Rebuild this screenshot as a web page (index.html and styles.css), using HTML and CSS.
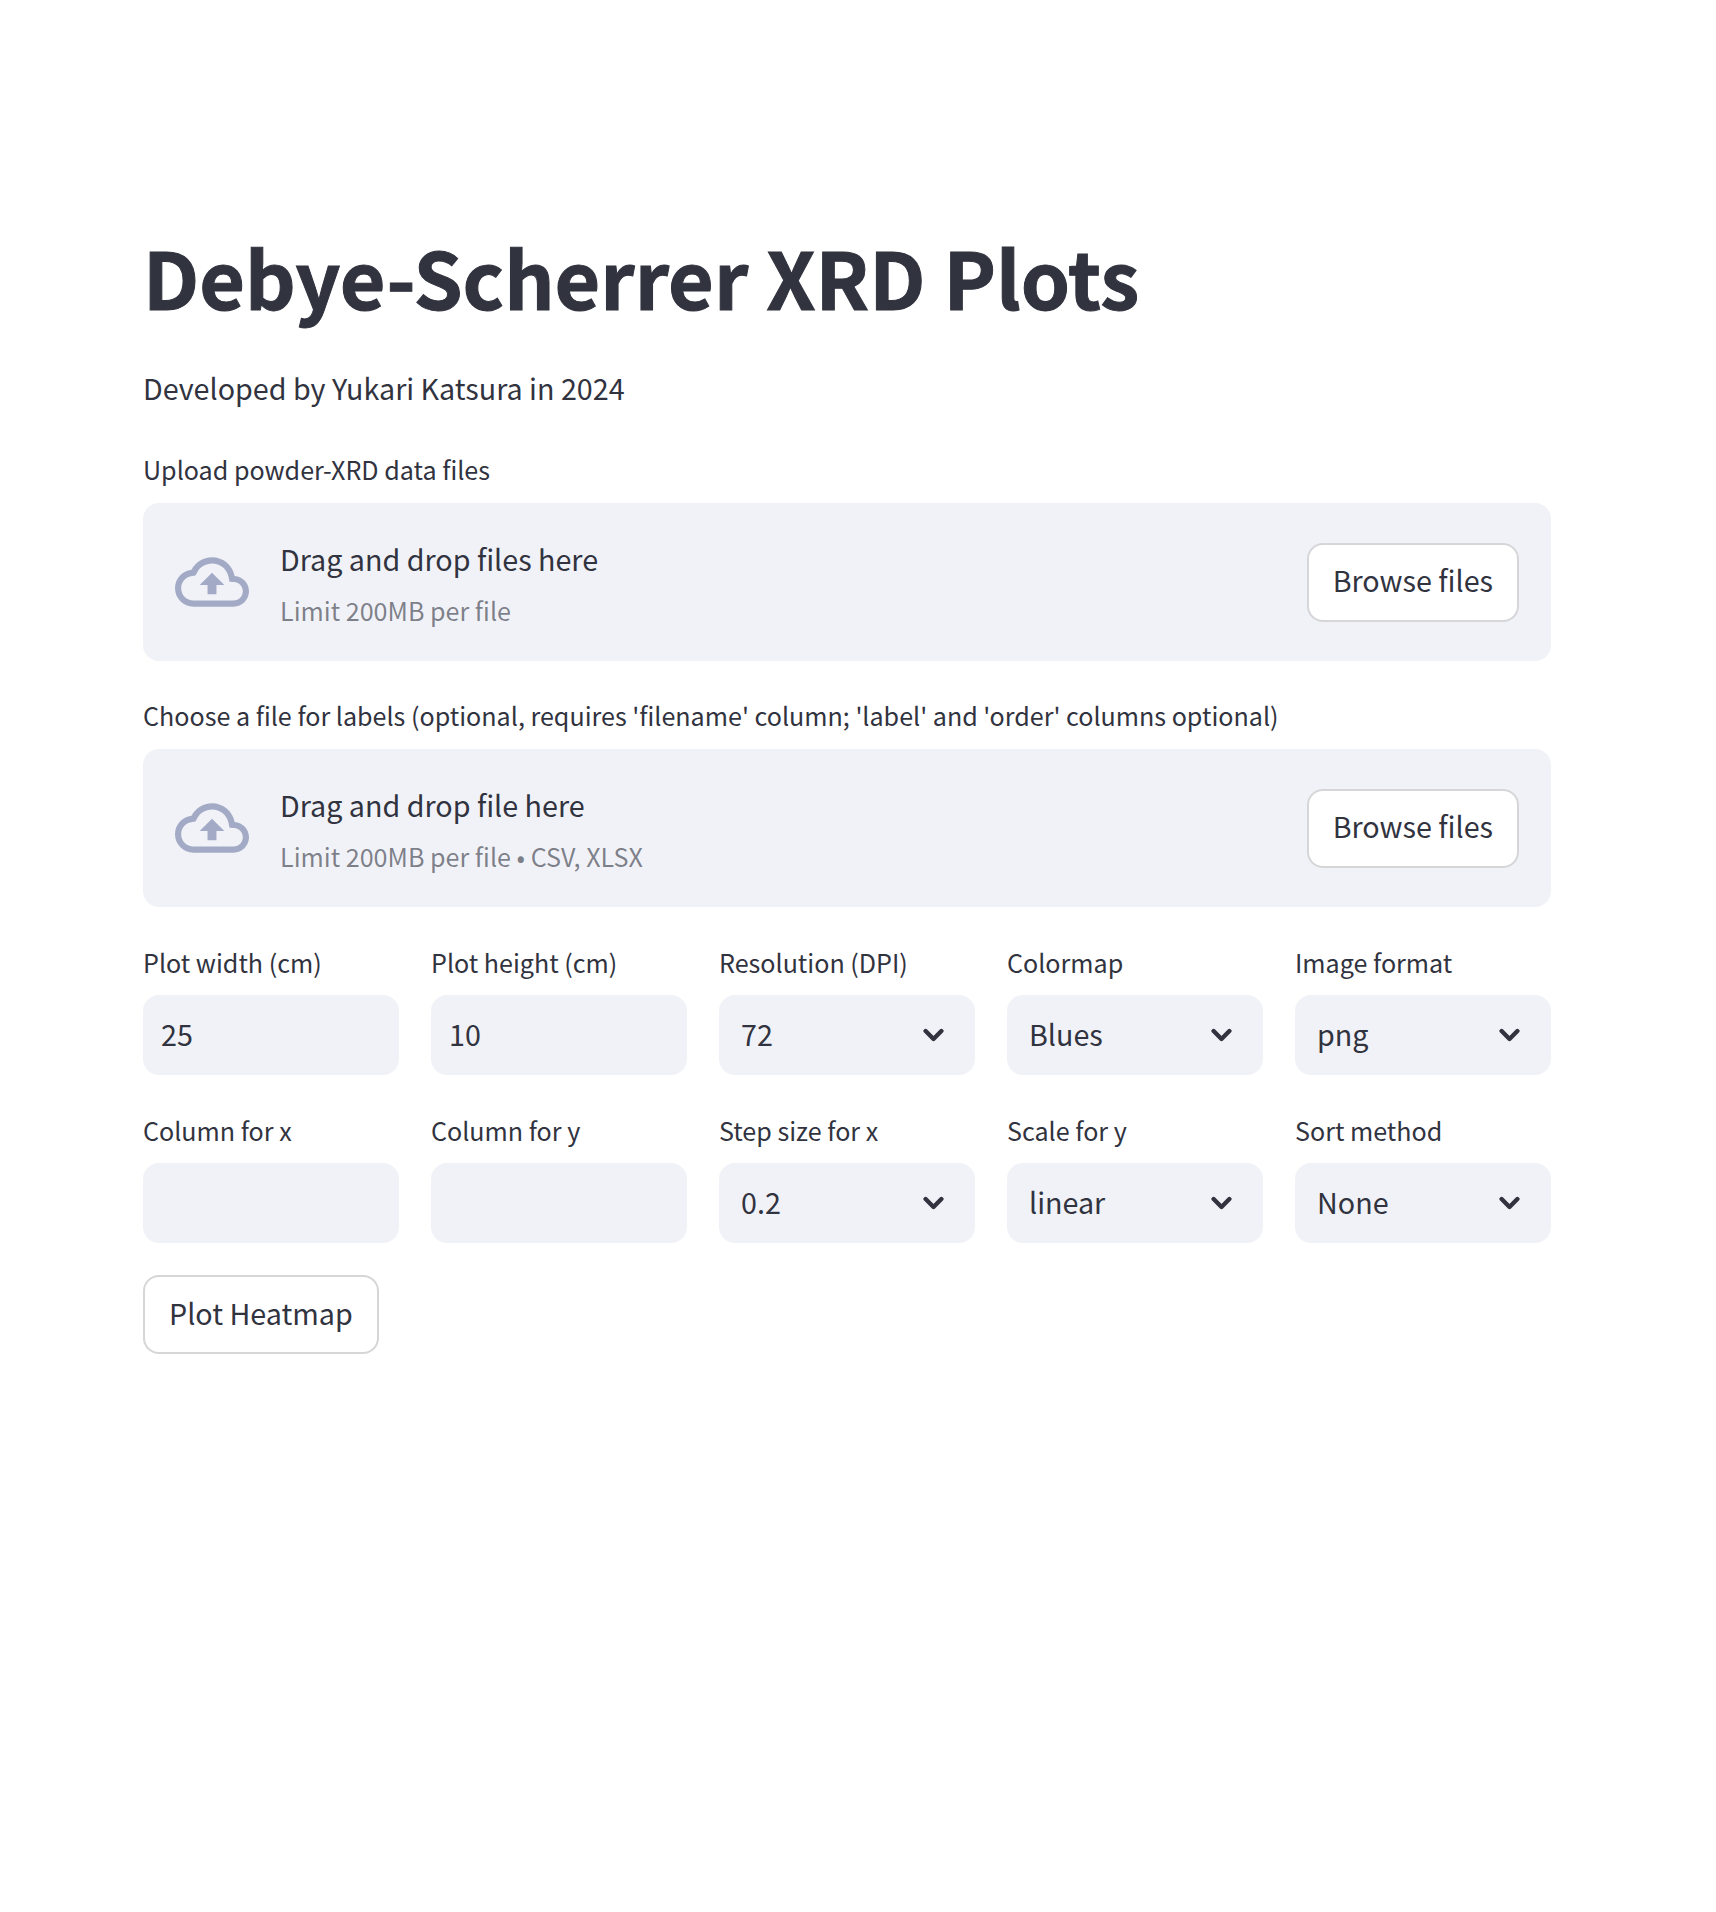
FILE: index.html
```html
<!DOCTYPE html>
<html lang="en">
<head>
<meta charset="utf-8">
<title>Debye-Scherrer XRD Plots</title>
<link rel="stylesheet" href="styles.css">
</head>
<body>
<main class="page">
  <h1 class="title">Debye-Scherrer XRD Plots</h1>
  <p class="subtitle">Developed by Yukari Katsura in 2024</p>

  <section class="uploader">
    <label class="label">Upload powder-XRD data files</label>
    <div class="dropzone">
      <svg class="cloud" viewBox="0 0 24 24"><path d="M19.35 10.04C18.67 6.59 15.64 4 12 4 9.11 4 6.6 5.64 5.35 8.04 2.34 8.36 0 10.91 0 14c0 3.31 2.69 6 6 6h13c2.76 0 5-2.24 5-5 0-2.64-2.05-4.78-4.65-4.96zM19 18H6c-2.21 0-4-1.79-4-4 0-2.05 1.53-3.76 3.56-3.97l1.07-.11.5-.95C8.08 7.14 9.94 6 12 6c2.62 0 4.88 1.86 5.39 4.43l.3 1.5 1.53.11c1.56.1 2.78 1.41 2.78 2.96 0 1.65-1.35 3-3 3zM8 13h2.55v3h2.9v-3H16l-4-4z"/></svg>
      <div class="drop-text">
        <div class="drop-main">Drag and drop files here</div>
        <div class="drop-sub">Limit 200MB per file</div>
      </div>
      <button class="btn">Browse files</button>
    </div>
  </section>

  <section class="uploader">
    <label class="label">Choose a file for labels (optional, requires 'filename' column; 'label' and 'order' columns optional)</label>
    <div class="dropzone">
      <svg class="cloud" viewBox="0 0 24 24"><path d="M19.35 10.04C18.67 6.59 15.64 4 12 4 9.11 4 6.6 5.64 5.35 8.04 2.34 8.36 0 10.91 0 14c0 3.31 2.69 6 6 6h13c2.76 0 5-2.24 5-5 0-2.64-2.05-4.78-4.65-4.96zM19 18H6c-2.21 0-4-1.79-4-4 0-2.05 1.53-3.76 3.56-3.97l1.07-.11.5-.95C8.08 7.14 9.94 6 12 6c2.62 0 4.88 1.86 5.39 4.43l.3 1.5 1.53.11c1.56.1 2.78 1.41 2.78 2.96 0 1.65-1.35 3-3 3zM8 13h2.55v3h2.9v-3H16l-4-4z"/></svg>
      <div class="drop-text">
        <div class="drop-main">Drag and drop file here</div>
        <div class="drop-sub">Limit 200MB per file • CSV, XLSX</div>
      </div>
      <button class="btn">Browse files</button>
    </div>
  </section>

  <section class="controls">
    <div class="control"><label class="label">Plot width (cm)</label><div class="field"><span>25</span></div></div>
    <div class="control"><label class="label">Plot height (cm)</label><div class="field"><span>10</span></div></div>
    <div class="control"><label class="label">Resolution (DPI)</label><div class="field select"><span>72</span><svg class="chev" viewBox="0 0 24 16"><path d="M3 3.5l9 9 9-9"/></svg></div></div>
    <div class="control"><label class="label">Colormap</label><div class="field select"><span>Blues</span><svg class="chev" viewBox="0 0 24 16"><path d="M3 3.5l9 9 9-9"/></svg></div></div>
    <div class="control"><label class="label">Image format</label><div class="field select"><span>png</span><svg class="chev" viewBox="0 0 24 16"><path d="M3 3.5l9 9 9-9"/></svg></div></div>
    <div class="control"><label class="label">Column for x</label><div class="field"></div></div>
    <div class="control"><label class="label">Column for y</label><div class="field"></div></div>
    <div class="control"><label class="label">Step size for x</label><div class="field select"><span>0.2</span><svg class="chev" viewBox="0 0 24 16"><path d="M3 3.5l9 9 9-9"/></svg></div></div>
    <div class="control"><label class="label">Scale for y</label><div class="field select"><span>linear</span><svg class="chev" viewBox="0 0 24 16"><path d="M3 3.5l9 9 9-9"/></svg></div></div>
    <div class="control"><label class="label">Sort method</label><div class="field select"><span>None</span><svg class="chev" viewBox="0 0 24 16"><path d="M3 3.5l9 9 9-9"/></svg></div></div>
  </section>

  <button class="btn plot">Plot Heatmap</button>
</main>
</body>
</html>
```

FILE: styles.css
```css
* { box-sizing: border-box; }
html, body { margin: 0; background: #fff; }
body {
  color: #31333f;
  font-family: "Noto Sans CJK JP", "Noto Sans", sans-serif;
  min-height: 1912px;
}
.page {
  width: 1408px;
  margin-left: 143px;
  padding-top: 222px;
}
.title {
  margin: 0;
  font-size: 78.8px;
  font-weight: 700;
  line-height: 108px;
  -webkit-text-stroke: 1px #31333f;
}
.subtitle {
  margin: 36px 0 0;
  font-size: 28.7px;
  line-height: 44px;
}
.uploader { margin-top: 41px; }
.uploader + .uploader { margin-top: 36px; }
.label {
  display: block;
  font-size: 25.1px;
  line-height: 36px;
}
.dropzone {
  display: flex;
  align-items: center;
  height: 158px;
  margin-top: 16px;
  padding: 0 32px;
  background: #f0f2f7;
  border-radius: 16px;
}
.cloud {
  flex: none;
  width: 74px;
  height: 74px;
  margin-right: 31px;
  fill: #a3aac6;
}
.drop-text { flex: 1; padding-top: 2px; }
.drop-main { font-size: 28.7px; line-height: 44px; }
.drop-sub {
  margin-top: 9px;
  font-size: 25.1px;
  line-height: 40px;
  color: rgba(49, 51, 63, 0.6);
}
.btn {
  height: 79px;
  padding: 0 24px 4px;
  font: inherit;
  font-size: 28.7px;
  line-height: 44px;
  color: #31333f;
  background: #fff;
  border: 2px solid rgba(49, 51, 63, 0.2);
  border-radius: 16px;
}
.controls {
  display: grid;
  grid-template-columns: repeat(5, 1fr);
  column-gap: 32px;
  row-gap: 37px;
  margin-top: 37px;
}
.field {
  display: flex;
  align-items: center;
  justify-content: space-between;
  height: 80px;
  margin-top: 15px;
  padding: 0 18px;
  font-size: 28.7px;
  background: #f0f2f7;
  border-radius: 16px;
}
.field span { padding-bottom: 4px; }
.select { padding: 0 22px; }
.chev {
  flex: none;
  width: 21px;
  height: 14px;
  margin-right: 9.5px;
  fill: none;
  stroke: #31333f;
  stroke-width: 5;
  stroke-linecap: round;
  stroke-linejoin: round;
}
.plot { display: block; margin-top: 32px; }
```
